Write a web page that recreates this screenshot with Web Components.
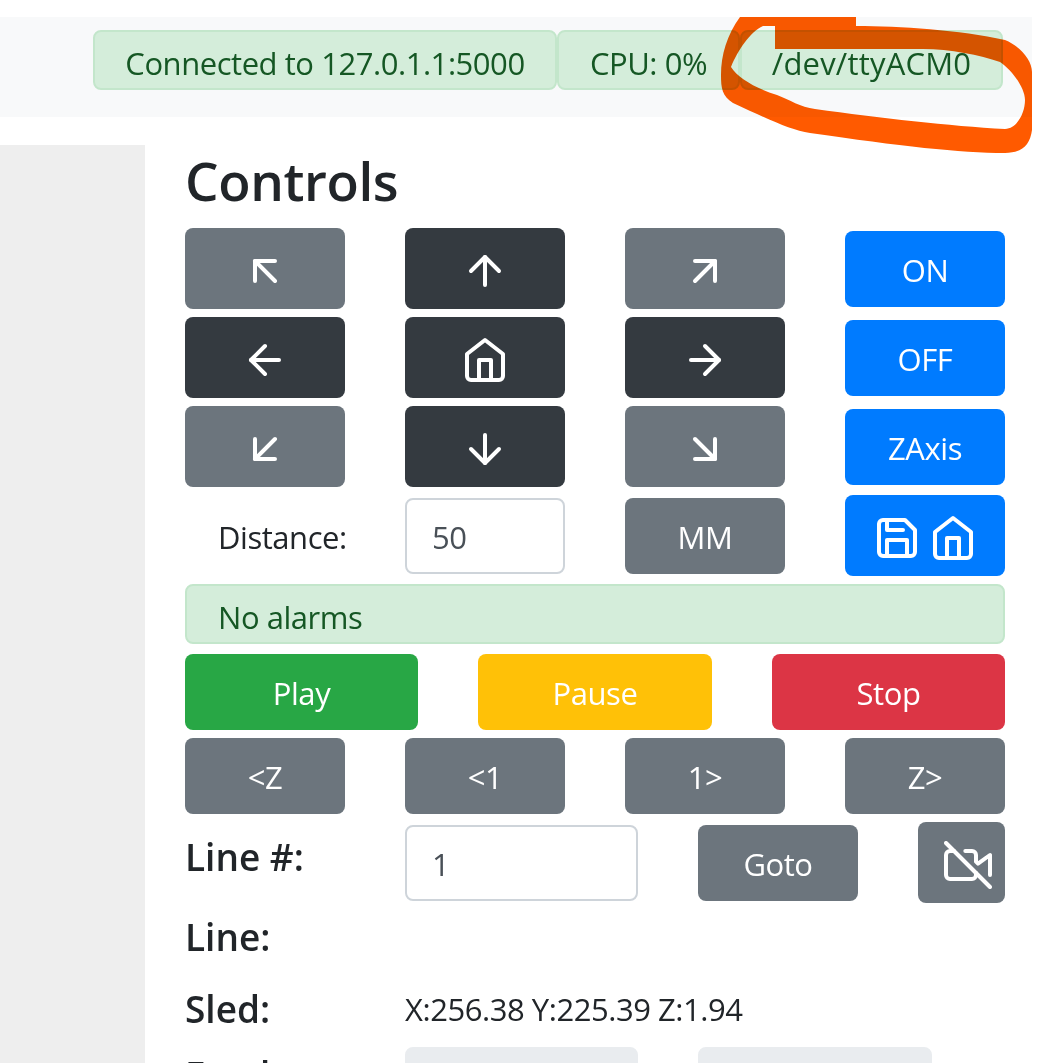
<!DOCTYPE html>
<html>
<head>
<meta charset="utf-8">
<title>Controls</title>
<style>
  html, body { margin: 0; height: 1063px; overflow: hidden; background: #fff; }
  body {
    position: relative;
    box-sizing: border-box;
    padding-top: 17px;
    font-family: "Open Sans", "Noto Sans", "Liberation Sans", sans-serif;
    font-size: 31px;
    letter-spacing: -0.45px;
    color: #212529;
  }
</style>
</head>
<body>
<status-bar>
  <status-pill width="464">Connected to 127.0.1.1:5000</status-pill>
  <status-pill width="183">CPU: 0%</status-pill>
  <status-pill width="263" style="letter-spacing:0.2px">/dev/ttyACM0</status-pill>
</status-bar>

<control-page>
  <h-title>Controls</h-title>

  <ctl-row>
    <ctl-btn tone="gray" tall><fe-icon name="arrow-up-left"></fe-icon></ctl-btn>
    <ctl-btn tone="dark" tall><fe-icon name="arrow-up"></fe-icon></ctl-btn>
    <ctl-btn tone="gray" tall><fe-icon name="arrow-up-right"></fe-icon></ctl-btn>
    <ctl-btn tone="blue">ON</ctl-btn>
  </ctl-row>
  <ctl-row>
    <ctl-btn tone="dark" tall><fe-icon name="arrow-left"></fe-icon></ctl-btn>
    <ctl-btn tone="dark" tall><fe-icon name="home"></fe-icon></ctl-btn>
    <ctl-btn tone="dark" tall><fe-icon name="arrow-right"></fe-icon></ctl-btn>
    <ctl-btn tone="blue">OFF</ctl-btn>
  </ctl-row>
  <ctl-row>
    <ctl-btn tone="gray" tall><fe-icon name="arrow-down-left"></fe-icon></ctl-btn>
    <ctl-btn tone="dark" tall><fe-icon name="arrow-down"></fe-icon></ctl-btn>
    <ctl-btn tone="gray" tall><fe-icon name="arrow-down-right"></fe-icon></ctl-btn>
    <ctl-btn tone="blue">ZAxis</ctl-btn>
  </ctl-row>
  <ctl-row>
    <ctl-text inset="33" style="padding-top:2px">Distance:</ctl-text>
    <ctl-field value="50"></ctl-field>
    <ctl-btn tone="gray">MM</ctl-btn>
    <ctl-btn tone="blue" tall><fe-icon name="save"></fe-icon><fe-icon name="home"></fe-icon></ctl-btn>
  </ctl-row>

  <alarm-box>No alarms</alarm-box>

  <ctl-row cols="233px 234px 233px" style="margin-top:2px">
    <ctl-btn tone="green">Play</ctl-btn>
    <ctl-btn tone="yellow">Pause</ctl-btn>
    <ctl-btn tone="red">Stop</ctl-btn>
  </ctl-row>
  <ctl-row>
    <ctl-btn tone="gray">&lt;Z</ctl-btn>
    <ctl-btn tone="gray">&lt;1</ctl-btn>
    <ctl-btn tone="gray">1&gt;</ctl-btn>
    <ctl-btn tone="gray">Z&gt;</ctl-btn>
  </ctl-row>
  <ctl-row cols="160px 233px 160px 87px">
    <ctl-label style="align-self:start;padding-top:11px">Line #:</ctl-label>
    <ctl-field value="1"></ctl-field>
    <ctl-btn tone="gray">Goto</ctl-btn>
    <ctl-btn tone="gray" tall start><fe-icon name="video-off"></fe-icon></ctl-btn>
  </ctl-row>
  <ctl-row gap="0" style="height:72px">
    <ctl-label>Line:</ctl-label>
  </ctl-row>
  <ctl-row gap="0" style="height:63px">
    <ctl-label>Sled:</ctl-label>
    <ctl-text style="grid-column:2 / span 3;padding-top:10px">X:256.38 Y:225.39 Z:1.94</ctl-text>
  </ctl-row>
  <ctl-row cols="160px 233px 234px" gap="0">
    <ctl-label style="padding-top:13px">Feed:</ctl-label>
    <ctl-field disabled style="margin-top:9px"></ctl-field>
    <ctl-field disabled style="margin-top:9px"></ctl-field>
  </ctl-row>
</control-page>

<scribble-mark></scribble-mark>

<script>
const ICONS = {
  'arrow-up-left': '<line x1="17" y1="17" x2="7" y2="7"/><polyline points="7 17 7 7 17 7"/>',
  'arrow-up': '<line x1="12" y1="19" x2="12" y2="5"/><polyline points="5 12 12 5 19 12"/>',
  'arrow-up-right': '<line x1="7" y1="17" x2="17" y2="7"/><polyline points="7 7 17 7 17 17"/>',
  'arrow-left': '<line x1="19" y1="12" x2="5" y2="12"/><polyline points="12 19 5 12 12 5"/>',
  'arrow-right': '<line x1="5" y1="12" x2="19" y2="12"/><polyline points="12 5 19 12 12 19"/>',
  'arrow-down-left': '<line x1="17" y1="7" x2="7" y2="17"/><polyline points="17 17 7 17 7 7"/>',
  'arrow-down': '<line x1="12" y1="5" x2="12" y2="19"/><polyline points="19 12 12 19 5 12"/>',
  'arrow-down-right': '<line x1="7" y1="7" x2="17" y2="17"/><polyline points="17 7 17 17 7 17"/>',
  'home': '<path d="M3 9l9-7 9 7v11a2 2 0 0 1-2 2H5a2 2 0 0 1-2-2z"/><polyline points="9 22 9 12 15 12 15 22"/>',
  'save': '<path d="M19 21H5a2 2 0 0 1-2-2V5a2 2 0 0 1 2-2h11l5 5v11a2 2 0 0 1-2 2z"/><polyline points="17 21 17 13 7 13 7 21"/><polyline points="7 3 7 8 15 8"/>',
  'video-off': '<path d="M16 16v1a2 2 0 0 1-2 2H3a2 2 0 0 1-2-2V7a2 2 0 0 1 2-2h2m5.66 0H14a2 2 0 0 1 2 2v3.34l1 1L23 7v10"/><line x1="1" y1="1" x2="23" y2="23"/>'
};

// small helper, every element here is just a style and some markup
function define(name, html, setup) {
  customElements.define(name, class extends HTMLElement {
    constructor() {
      super();
      this.attachShadow({ mode: 'open' });
      this.shadowRoot.innerHTML = html;
    }
    connectedCallback() {
      if (setup) setup(this, this.shadowRoot);
    }
  });
}

define('fe-icon', `
<style>
  :host { display: block; width: 48px; height: 48px; flex: none; }
  svg { display: block; width: 48px; height: 48px; fill: none; stroke: currentColor;
    stroke-width: 2; stroke-linecap: round; stroke-linejoin: round; }
</style>
<svg viewBox="0 0 24 24"></svg>`, (el, root) => {
  root.querySelector('svg').innerHTML = ICONS[el.getAttribute('name')] || '';
});

define('status-bar', `
<style>
  :host { display: flex; justify-content: flex-end; align-items: flex-start; box-sizing: border-box;
    width: 1032px; height: 100px; padding: 13px 29px 0 0; background: #f8f9fa; }
</style>
<slot></slot>`);

define('status-pill', `
<style>
  :host { display: flex; align-items: center; justify-content: center; box-sizing: border-box; height: 60px;
    padding-top: 6px; background: #d4edda; border: 2px solid #c3e6cb; border-radius: 8px; color: #155724;
    white-space: nowrap; flex: none; }
</style>
<slot></slot>`, (el) => {
  el.style.width = el.getAttribute('width') + 'px';
});

define('control-page', `
<style>
  :host { display: grid; grid-template-columns: 145px 820px; column-gap: 40px; margin-top: 28px; }
  .rail { background: #eee; height: 918px; }
  .body { display: flex; flex-direction: column; gap: 8px; }
</style>
<div class="rail"></div>
<div class="body"><slot></slot></div>`);

define('h-title', `
<style>
  :host { display: block; font-size: 53px; font-weight: 600; line-height: 71px; margin-bottom: 4px; letter-spacing: -0.4px; color: #212529; }
</style>
<slot></slot>`);

define('ctl-row', `
<style>
  :host { display: grid; grid-template-columns: repeat(4, 160px); column-gap: 60px; align-items: center; }
</style>
<slot></slot>`, (el) => {
  const cols = el.getAttribute('cols');
  if (cols) el.style.gridTemplateColumns = cols;
  if (el.getAttribute('gap') === '0') {
    el.style.marginTop = '-8px';
    el.style.alignItems = 'start';
  }
});

define('ctl-btn', `
<style>
  :host { display: block; }
  button { display: flex; justify-content: center; align-items: center; gap: 8px; box-sizing: border-box; width: 100%; height: 76px;
    padding: 2px 0 0; border: 0; border-radius: 8px; color: #fff; background: var(--bg, #6c757d);
    font: inherit; letter-spacing: inherit; cursor: pointer; }
  :host([tall]) button { height: 81px; align-items: flex-start; padding-top: 19px; }
  :host([start]) button { justify-content: flex-start; padding-left: 26px; }
  :host([tone="dark"]) { --bg: #343a40; }
  :host([tone="blue"]) { --bg: #007bff; }
  :host([tone="green"]) { --bg: #28a745; }
  :host([tone="yellow"]) { --bg: #ffc107; }
  :host([tone="red"]) { --bg: #dc3545; }
</style>
<button type="button"><slot></slot></button>`);

define('ctl-field', `
<style>
  :host { display: block; }
  input { display: block; box-sizing: border-box; width: 100%; height: 76px; padding: 2px 25px 0;
    border: 2px solid #ced4da; border-radius: 8px; background: #fff; color: #495057; font: inherit; letter-spacing: inherit; outline: none; }
  input:disabled { background: #e9ecef; border-color: #e9ecef; }
</style>
<input type="text">`, (el, root) => {
  const input = root.querySelector('input');
  input.value = el.getAttribute('value') || '';
  input.disabled = el.hasAttribute('disabled');
});

define('ctl-text', `
<style>
  :host { display: block; line-height: 48px; white-space: nowrap; }
</style>
<slot></slot>`, (el) => {
  const inset = el.getAttribute('inset');
  if (inset) el.style.paddingLeft = inset + 'px';
});

define('ctl-label', `
<style>
  :host { display: block; font-size: 37px; font-weight: 600; line-height: 48px; padding-top: 10px; letter-spacing: 0; }
</style>
<slot></slot>`);

define('alarm-box', `
<style>
  :host { display: flex; align-items: center; box-sizing: border-box; height: 60px; padding: 6px 0 0 31px;
    background: #d4edda; border: 2px solid #c3e6cb; border-radius: 8px; color: #155724; }
</style>
<slot></slot>`);

define('scribble-mark', `
<style>
  :host { position: absolute; left: 0; top: 0; mix-blend-mode: multiply; pointer-events: none; }
  svg { display: block; }
</style>
<svg width="1038" height="170" viewBox="0 0 1038 170">
  <path fill="#ff5a00" fill-rule="evenodd" d="M740 17 L856 17 L856 26 C900 26 960 30 1005 40 C1020 46 1032 60 1032 72 L1032 130 C1030 145 1022 153 1005 153 C960 153 900 146 810 133 C790 130 770 120 733 103 C722 96 721 88 721 75 C721 55 727 35 740 17 Z
    M775 26 L763 26 C750 32 738 50 731 67 C738 78 755 88 777 95 C790 100 800 107 815 109 C880 118 950 126 1005 129 C1018 128 1025 112 1025 100 C1025 88 1012 70 1000 62 C980 55 950 49 923 49 L775 49 Z"/>
</svg>`);
</script>
</body>
</html>
